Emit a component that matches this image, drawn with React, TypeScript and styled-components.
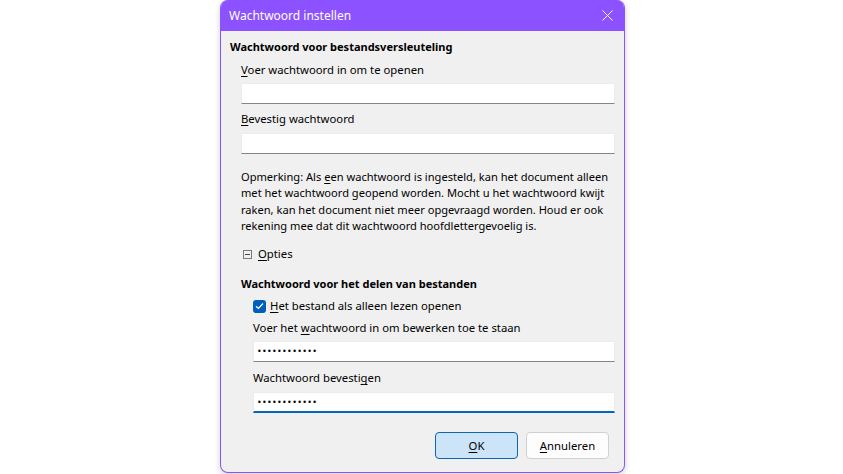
import React from "react";
import styled, { createGlobalStyle } from "styled-components";

const GlobalStyle = createGlobalStyle`
  html, body {
    margin: 0;
    padding: 0;
    background: #ffffff;
    font-family: "Noto Sans", "Open Sans", sans-serif;
    font-size: 11.3px;
    color: #000;
  }
  u { text-decoration-thickness: 1px; text-underline-offset: 2px; }
`;

const Page = styled.div`
  display: flex;
  justify-content: center;
  box-sizing: border-box;
  width: 843px;
  height: 474px;
  padding-left: 2px;
`;

const Dialog = styled.div`
  width: 405px;
  height: 473px;
  box-sizing: border-box;
  border: 1px solid #8c52ff;
  border-top: none;
  border-radius: 8px;
  background: #f0f0f0;
  overflow: hidden;
  display: flex;
  flex-direction: column;
  box-shadow: 0 2px 6px rgba(0, 0, 0, 0.18);
`;

const TitleBar = styled.div`
  height: 31px;
  flex: none;
  background: #8c52ff;
  color: #fff;
  display: flex;
  align-items: center;
  justify-content: space-between;
  padding: 0 12px 0 9px;
  margin: 0 -1px;
  font-size: 12px;
`;

const Body = styled.div`
  flex: 1;
  display: flex;
  flex-direction: column;
  padding: 8px 9px 0 9px;
`;

const Heading = styled.div<{ $top?: number }>`
  font-weight: 700;
  font-size: 11px;
  line-height: 16px;
  height: 16px;
  margin-top: ${(p) => p.$top ?? 0}px;
  white-space: nowrap;
`;

const Indent = styled.div<{ $left: number }>`
  display: flex;
  flex-direction: column;
  padding-left: ${(p) => p.$left}px;
`;

const Label = styled.div<{ $top: number }>`
  line-height: 16px;
  height: 16px;
  margin-top: ${(p) => p.$top}px;
  white-space: nowrap;
`;

const Field = styled.input<{ $top: number; $focused?: boolean }>`
  display: block;
  box-sizing: border-box;
  height: 21px;
  width: 100%;
  margin: ${(p) => p.$top}px 0 0 0;
  border: 1px solid #ececec;
  border-bottom: ${(p) => (p.$focused ? "2px solid #0067c0" : "1px solid #858585")};
  background: #fff;
  padding: 0 0 0 3px;
  outline: none;
  font-family: "DejaVu Sans", sans-serif;
  font-size: 8px;
  letter-spacing: 0.3px;
  color: #000;
`;

const Note = styled.p`
  margin: 15px 0 0 0;
  line-height: 16.3px;
  font-size: 11.1px;
  white-space: nowrap;
`;

const Toggle = styled.div`
  display: flex;
  align-items: center;
  margin-top: 12px;
  height: 16px;
  line-height: 16px;
`;

const MinusBox = styled.span`
  width: 7px;
  height: 7px;
  border: 1px solid #7a7a7a;
  position: relative;
  margin: 0 6px 0 2px;
  &::after {
    content: "";
    position: absolute;
    left: 1px;
    right: 1px;
    top: 3px;
    height: 1px;
    background: #444;
  }
`;

const CheckRow = styled.label`
  display: flex;
  align-items: center;
  margin-top: 6px;
  height: 16px;
  line-height: 16px;
`;

const CheckBox = styled.span`
  width: 13px;
  height: 13px;
  border-radius: 3px;
  background: #005fb8;
  display: inline-flex;
  align-items: center;
  justify-content: center;
  margin-right: 4px;
`;

const Footer = styled.div`
  display: flex;
  justify-content: flex-end;
  gap: 8px;
  margin-top: 19px;
  padding-right: 6px;
`;

const Button = styled.button<{ $primary?: boolean }>`
  width: 83px;
  height: 27px;
  box-sizing: border-box;
  border-radius: 4px;
  font-family: "Noto Sans", "Open Sans", sans-serif;
  font-size: 11.3px;
  color: #000;
  border: 1px solid ${(p) => (p.$primary ? "#0f64b4" : "#d0d0d0")};
  background: ${(p) => (p.$primary ? "#cce4f7" : "#fdfdfd")};
  padding: 0;
`;

const Close = () => (
  <svg width="11" height="11" viewBox="0 0 11 11">
    <path d="M0.5 0.5 L10.5 10.5 M10.5 0.5 L0.5 10.5" stroke="#fff" strokeWidth="1" />
  </svg>
);

const dots = "••••••••••••";

export default function App() {
  return (
    <>
      <GlobalStyle />
      <Page>
        <Dialog>
          <TitleBar>
            <span>Wachtwoord instellen</span>
            <Close />
          </TitleBar>
          <Body>
            <Heading>Wachtwoord voor bestandsversleuteling</Heading>
            <Indent $left={11}>
              <Label $top={7}>
                <u>V</u>oer wachtwoord in om te openen
              </Label>
              <Field $top={5} readOnly value="" />
              <Label $top={7}>
                <u>B</u>evestig wachtwoord
              </Label>
              <Field $top={6} readOnly value="" />
              <Note>
                Opmerking: Als <u>e</u>en wachtwoord is ingesteld, kan het document alleen
                <br />
                met het wachtwoord geopend worden. Mocht u het wachtwoord kwijt
                <br />
                raken, kan het document niet meer opgevraagd worden. Houd er ook
                <br />
                rekening mee dat dit wachtwoord hoofdlettergevoelig is.
              </Note>
              <Toggle>
                <MinusBox />
                <u>O</u>pties
              </Toggle>
              <Heading $top={14}>Wachtwoord voor het delen van bestanden</Heading>
              <Indent $left={12}>
                <CheckRow>
                  <CheckBox>
                    <svg width="9" height="8" viewBox="0 0 9 8">
                      <path d="M1 4.2 L3.4 6.5 L8 1.5" stroke="#fff" strokeWidth="1.2" fill="none" />
                    </svg>
                  </CheckBox>
                  <span>
                    <u>H</u>et bestand als alleen lezen openen
                  </span>
                </CheckRow>
                <Label $top={6}>
                  Voer het <u>w</u>achtwoord in om bewerken toe te staan
                </Label>
                <Field $top={5} readOnly value={dots} />
                <Label $top={8}>
                  Wachtwoord bevesti<u>g</u>en
                </Label>
                <Field $top={6} $focused readOnly value={dots} />
              </Indent>
            </Indent>
            <Footer>
              <Button $primary>
                <u>O</u>K
              </Button>
              <Button>
                <u>A</u>nnuleren
              </Button>
            </Footer>
          </Body>
        </Dialog>
      </Page>
    </>
  );
}
